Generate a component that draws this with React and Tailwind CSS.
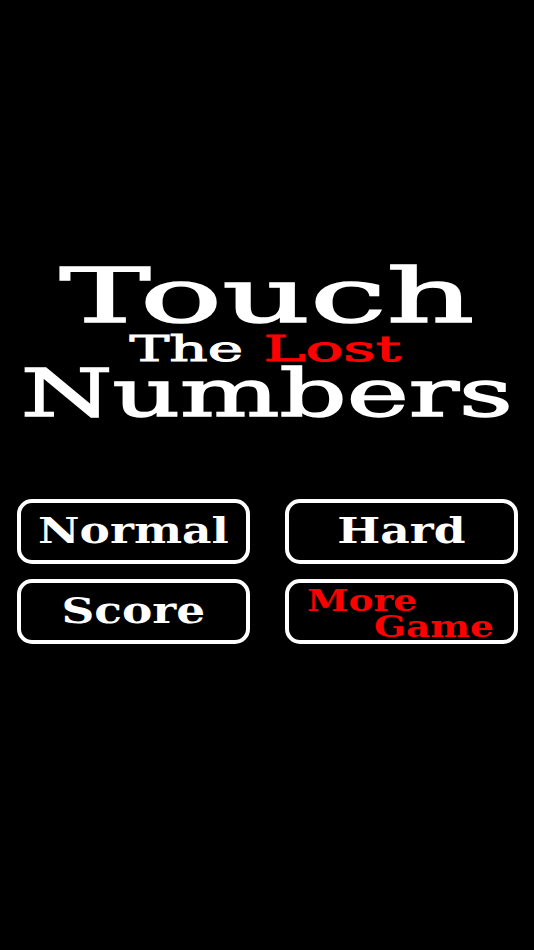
import React from 'react';

const serif = { fontFamily: '"DejaVu Serif", "Liberation Serif", serif' };

const MenuButton = ({ children, className = '' }) => (
  <button
    type="button"
    className={`h-[65px] w-[233px] rounded-[15px] border-[4px] border-white bg-black flex items-center justify-center ${className}`}
    style={serif}
  >
    {children}
  </button>
);

const App = () => {
  return (
    <div className="min-h-[950px] w-full bg-black flex flex-col items-center pt-[259px] select-none" style={serif}>
      <h1 className="flex flex-col items-center text-white font-normal [-webkit-text-stroke:1.5px_currentColor]">
        <span className="block h-[75px] text-[75px] leading-[75px]">
          <span className="inline-block scale-x-[1.82]">Touch</span>
        </span>
        <span className="block h-[36px] -mt-[3px] text-[36px] leading-[36px] [-webkit-text-stroke:1px_currentColor]">
          <span className="inline-block scale-x-[1.66] -translate-x-[10px]">The</span>
          <span className="inline-block w-[62px]"></span>
          <span className="inline-block scale-x-[1.75] text-[#ff0000]">Lost</span>
        </span>
        <span className="block h-[66px] -mt-[6px] text-[66px] leading-[66px]">
          <span className="inline-block scale-x-[1.59]">Numbers</span>
        </span>
      </h1>

      <div className="mt-[72px] grid grid-cols-2 gap-x-[35px] gap-y-[15px]">
        <MenuButton>
          <span className="inline-block scale-x-[1.3] text-[35px] font-bold text-white leading-none -mt-[3px]">Normal</span>
        </MenuButton>
        <MenuButton>
          <span className="inline-block scale-x-[1.3] text-[35px] font-bold text-white leading-none -mt-[3px]">Hard</span>
        </MenuButton>
        <MenuButton>
          <span className="inline-block scale-x-[1.3] text-[35px] font-bold text-white leading-none -mt-[3px]">Score</span>
        </MenuButton>
        <MenuButton className="flex-col !items-start !justify-start pl-[18px] pt-[5px]">
          <span className="inline-block origin-left scale-x-[1.25] text-[30px] font-bold text-[#ff0000] leading-[26px]">More</span>
          <span className="inline-block origin-left ml-[67px] scale-x-[1.25] text-[30px] font-bold text-[#ff0000] leading-[26px]">Game</span>
        </MenuButton>
      </div>
    </div>
  );
};

export default App;
